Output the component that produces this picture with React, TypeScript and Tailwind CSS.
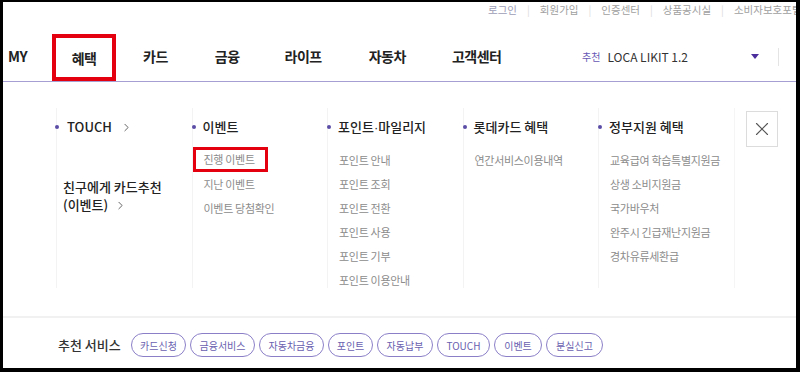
import { ChevronRight, X } from 'lucide-react'

const font = { fontFamily: '"Noto Sans CJK KR", "Noto Sans", sans-serif' }

const utilLinks = ['로그인', '회원가입', '인증센터', '상품공시실', '소비자보호포털']

const columns = [
  { title: '이벤트', items: ['진행 이벤트', '지난 이벤트', '이벤트 당첨확인'] },
  { title: '포인트·마일리지', items: ['포인트 안내', '포인트 조회', '포인트 전환', '포인트 사용', '포인트 기부', '포인트 이용안내'] },
  { title: '롯데카드 혜택', items: ['연간서비스이용내역'] },
  { title: '정부지원 혜택', items: ['교육급여 학습특별지원금', '상생 소비지원금', '국가바우처', '완주시 긴급재난지원금', '경차유류세환급'] },
]

const pills: [string, string][] = [
  ['카드신청', 'w-[55px]'],
  ['금융서비스', 'w-[65px]'],
  ['자동차금융', 'w-[65px]'],
  ['포인트', 'w-[45px]'],
  ['자동납부', 'w-[56px]'],
  ['TOUCH', 'w-[53px]'],
  ['이벤트', 'w-[48px]'],
  ['분실신고', 'w-[57px]'],
]

function Bullet() {
  return <span className="w-[4px] h-[4px] rounded-full bg-[#5b4ca6] shrink-0" />
}

// the middle dot renders full width in the CJK font, so give it a latin one
function Title({ text }: { text: string }) {
  const parts = text.split('·')
  if (parts.length === 1) return <span>{text}</span>
  return (
    <span>
      {parts[0]}
      <span style={{ fontFamily: '"Liberation Sans", sans-serif' }}>·</span>
      {parts[1]}
    </span>
  )
}

export default function App() {
  return (
    <div className="w-[800px] h-[372px] box-border bg-white border-black border-l-[3px] border-t-2 border-r-4 border-b-4 overflow-hidden flex flex-col" style={font}>
      {/* utility links */}
      <div className="h-[20px] flex items-start pl-[485px] text-[10.5px] leading-[16px] text-[#a0a0a0] whitespace-nowrap">
        {utilLinks.map((l, i) => (
          <div key={l} className="flex">
            {i > 0 && <span className="mx-[10px] text-[#dcdcdc]">|</span>}
            <span className={i === 0 ? 'text-[#9c9cb6]' : ''}>{l}</span>
          </div>
        ))}
      </div>

      {/* main nav */}
      <div className="h-[60px] pt-[10px] flex items-center border-b border-[#a69fd3] text-[14px] font-bold text-[#222] tracking-[-0.5px]">
        <span className="ml-[5px]">MY</span>
        <div className="ml-[25px] self-end w-[64px] h-[47px] border-4 border-[#e5000f] flex items-center justify-center pt-[2px]">혜택</div>
        <span className="ml-[27px]">카드</span>
        <span className="ml-[47px]">금융</span>
        <span className="ml-[45px]">라이프</span>
        <span className="ml-[47px]">자동차</span>
        <span className="ml-[46px]">고객센터</span>
        <div className="ml-auto mr-[17px] w-[197px] flex items-center font-normal tracking-normal">
          <span className="text-[10px] text-[#6657b4]">추천</span>
          <span className="ml-[7px] text-[12px] text-[#333]">LOCA LIKIT 1.2</span>
          <span className="ml-auto mr-[19px] w-0 h-0 border-l-[4px] border-r-[4px] border-t-[5px] border-l-transparent border-r-transparent border-t-[#4b2e9c]" />
          <span className="w-px h-[18px] bg-[#e4e4e4]" />
        </div>
      </div>

      {/* mega menu */}
      <div className="h-[234px] flex items-start pl-[54px]">
        <div className="w-[135.5px] h-[180px] mt-[26px] border-l border-[#f3f3f3] -ml-px">
          <div className="mt-[9px] h-[20px] flex items-center gap-[8px] text-[13px] font-medium text-[#222] -ml-[2px]">
            <Bullet />
            <span>TOUCH</span>
            <ChevronRight size={13} strokeWidth={1.5} className="text-[#444]" />
          </div>
          <div className="mt-[41px] flex items-start gap-[8px] text-[13px] font-medium text-[#222] leading-[18px] -ml-[2px]">
            <span className="mt-[7px]"><Bullet /></span>
            <div>
              친구에게 카드추천
              <div className="flex items-center">
                (이벤트)
                <ChevronRight size={13} strokeWidth={1.5} className="text-[#444] ml-[6px]" />
              </div>
            </div>
          </div>
        </div>

        {columns.map((c, ci) => (
          <div key={c.title} className="w-[135.5px] h-[180px] mt-[26px] border-l border-[#f3f3f3]">
            <div className="mt-[9px] h-[20px] flex items-center gap-[7px] text-[13px] font-medium text-[#222] -ml-[1px]">
              <Bullet />
              <Title text={c.title} />
            </div>
            <div className="mt-[11px] text-[11px] tracking-[-0.3px] text-[#8c8c8c]">
              {c.items.map((it, i) =>
                ci === 0 && i === 0 ? (
                  <div key={it} className="-mt-px w-[75px] h-[25px] border-[3px] border-[#e5000f] pl-[8px] flex items-center">{it}</div>
                ) : (
                  <div key={it} className="h-[24px] pl-[11px] flex items-center">{it}</div>
                )
              )}
            </div>
          </div>
        ))}

        <div className="w-[60px] h-[180px] mt-[26px] border-l border-[#f5f5f5]">
          <button className="mt-[3px] ml-[11px] w-[32px] h-[36px] border border-[#dcdcdc] flex items-center justify-center text-[#555]">
            <X size={22} strokeWidth={1.2} />
          </button>
        </div>
      </div>

      <div className="h-[2px] bg-[#f1f1f1]" />

      {/* recommended services */}
      <div className="h-[50px] pt-[4px] flex items-center pl-[55px]">
        <span className="w-[73px] text-[13px] font-medium text-[#333]">추천 서비스</span>
        <div className="flex gap-[4px]">
          {pills.map(([p, w]) => (
            <span key={p} className={`${w} h-[24px] rounded-full border border-[#8b80c8] flex items-center justify-center text-[10px] text-[#6a5fb0]`}>{p}</span>
          ))}
        </div>
      </div>
    </div>
  )
}
